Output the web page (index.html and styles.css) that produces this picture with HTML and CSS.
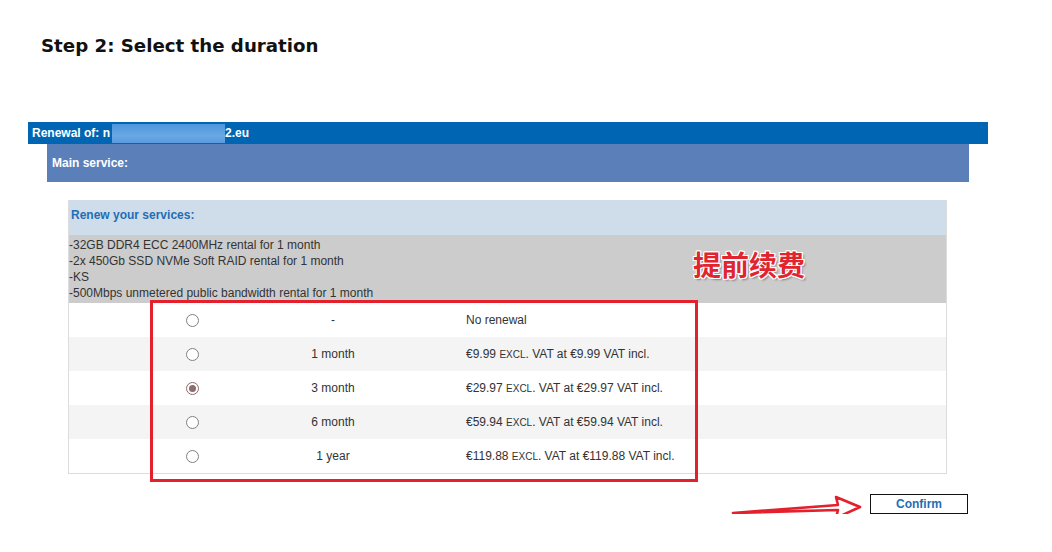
FILE: index.html
```html
<!DOCTYPE html>
<html lang="en">
<head>
  <meta charset="UTF-8">
  <title>Renewal - Step 2</title>
  <link rel="stylesheet" href="styles.css">
</head>
<body>
  <h1 class="step-title">Step 2: Select the duration</h1>

  <div class="renewal">
    <div class="renewal-head">Renewal of: n<span class="blur"></span>2.eu</div>
    <div class="main-service">Main service:</div>

    <div class="renew-box">
      <div class="renew-head">Renew your services:</div>
      <div class="services">
        -32GB DDR4 ECC 2400MHz rental for 1 month<br>
        -2x 450Gb SSD NVMe Soft RAID rental for 1 month<br>
        -KS<br>
        -500Mbps unmetered public bandwidth rental for 1 month
      </div>

      <div class="row">
        <span class="pad"></span>
        <span class="radio-cell"><span class="radio"></span></span>
        <span class="duration">-</span>
        <span class="price">No renewal</span>
      </div>
      <div class="row alt">
        <span class="pad"></span>
        <span class="radio-cell"><span class="radio"></span></span>
        <span class="duration">1 month</span>
        <span class="price">€9.99 <span class="sc">Excl</span>. VAT at €9.99 VAT incl.</span>
      </div>
      <div class="row">
        <span class="pad"></span>
        <span class="radio-cell"><span class="radio checked"></span></span>
        <span class="duration">3 month</span>
        <span class="price">€29.97 <span class="sc">Excl</span>. VAT at €29.97 VAT incl.</span>
      </div>
      <div class="row alt">
        <span class="pad"></span>
        <span class="radio-cell"><span class="radio"></span></span>
        <span class="duration">6 month</span>
        <span class="price">€59.94 <span class="sc">Excl</span>. VAT at €59.94 VAT incl.</span>
      </div>
      <div class="row">
        <span class="pad"></span>
        <span class="radio-cell"><span class="radio"></span></span>
        <span class="duration">1 year</span>
        <span class="price">€119.88 <span class="sc">Excl</span>. VAT at €119.88 VAT incl.</span>
      </div>

      <div class="highlight"></div>
      <div class="note">提前续费</div>
    </div>

    <div class="actions">
      <svg class="arrow" width="134" height="30" viewBox="0 0 134 30">
        <path d="M2 19 L107 11 L105 3 L129 13 L105 24 L107 16 Z" stroke="#e3202b" stroke-width="2.6" fill="none" stroke-linejoin="round"/>
      </svg>
      <button class="confirm">Confirm</button>
    </div>
  </div>
</body>
</html>
```

FILE: styles.css
```css
* { box-sizing: border-box; }

body {
  margin: 0;
  font-family: "Liberation Sans", Arial, sans-serif;
  font-size: 12px;
  color: #333;
  background: #fff;
}

.step-title {
  margin: 0;
  padding: 33px 0 0 41px;
  font-family: "DejaVu Sans", Verdana, sans-serif;
  font-size: 18.2px;
  font-weight: bold;
  color: #111;
  line-height: 26px;
}

.renewal {
  margin: 63px 0 0 28px;
  width: 960px;
  position: relative;
}

.renewal-head {
  height: 22px;
  line-height: 22px;
  padding-left: 4px;
  background: #0066b3;
  color: #fff;
  font-weight: bold;
  display: flex;
  align-items: center;
}

.blur {
  display: inline-block;
  width: 113px;
  height: 19px;
  margin: 1px 0 0 2px;
  background: linear-gradient(to bottom, #4f95dd, #6aa7e4 60%, #5a9be0);
}

.main-service {
  margin-left: 19px;
  width: 922px;
  height: 38px;
  padding: 12px 0 0 5px;
  background: #5a7fb9;
  color: #fff;
  font-weight: bold;
}

.renew-box {
  position: relative;
  margin: 18px 0 0 40px;
  width: 879px;
  border: 1px solid #dcdcdc;
  border-top: none;
}

.renew-head {
  height: 35px;
  padding: 8px 0 0 2px;
  background: #cfdcea;
  color: #1f6eb5;
  font-weight: bold;
}

.services {
  height: 68px;
  padding: 2px 0 0 0;
  background: #cccccc;
  line-height: 16px;
  color: #333;
}

.row {
  display: flex;
  align-items: center;
  height: 34px;
  background: #fff;
  color: #333;
}

.row.alt { background: #f4f4f4; }

.pad { width: 110px; }

.radio-cell {
  width: 26px;
  display: flex;
  justify-content: center;
}

.radio {
  width: 13px;
  height: 13px;
  border: 1px solid #808080;
  border-radius: 50%;
  background: #fff;
  display: flex;
  align-items: center;
  justify-content: center;
}

.radio.checked { border-color: #8a6a6a; }
.radio.checked::after {
  content: "";
  width: 7px;
  height: 7px;
  border-radius: 50%;
  background: #8e6b6d;
}

.duration {
  width: 256px;
  text-align: center;
}

.price { padding-left: 5px; }

.sc {
  text-transform: uppercase;
  font-size: 10px;
}

.highlight {
  position: absolute;
  left: 81px;
  top: 100px;
  width: 548px;
  height: 182px;
  border: 3px solid #e3202b;
}

.note {
  position: absolute;
  left: 624px;
  top: 44px;
  font-family: "Noto Sans CJK SC", sans-serif;
  font-size: 28px;
  font-weight: bold;
  color: #e02530;
  text-shadow: 1px 0 #fff, -1px 0 #fff, 0 1px #fff, 0 -1px #fff,
               1px 1px #fff, -1px -1px #fff, 1px -1px #fff, -1px 1px #fff,
               2px 2px 2px rgba(0,0,0,0.35);
}

.actions {
  position: relative;
  display: flex;
  justify-content: flex-end;
  padding: 20px 20px 0 0;
}

.arrow {
  position: absolute;
  left: 703px;
  top: 20px;
}

.confirm {
  width: 98px;
  height: 20px;
  padding: 0;
  border: 1px solid #111;
  background: #fff;
  color: #1f6eb5;
  font-family: "Liberation Sans", Arial, sans-serif;
  font-size: 12px;
  font-weight: bold;
}
```
